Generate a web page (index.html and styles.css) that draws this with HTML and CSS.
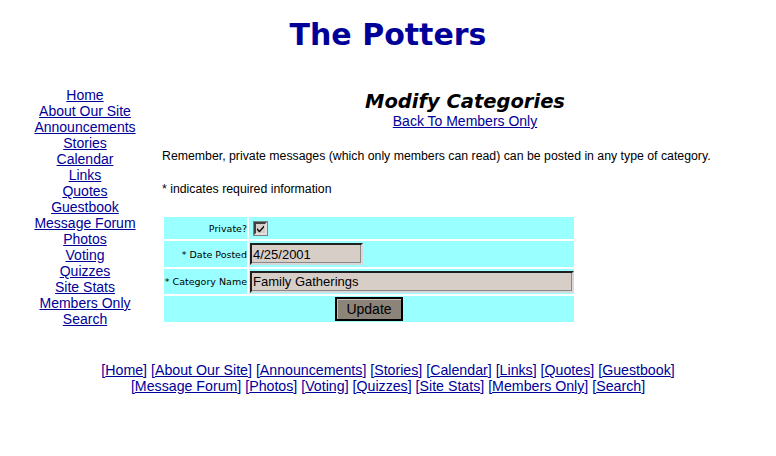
FILE: index.html
```html
<!DOCTYPE html>
<html>
<head>
<meta charset="utf-8">
<link rel="stylesheet" href="styles.css">
</head>
<body>
<h1 class="site-title">The Potters</h1>
<div class="layout">
  <nav class="side-nav">
    <a href="#">Home</a>
    <a href="#">About Our Site</a>
    <a href="#">Announcements</a>
    <a href="#">Stories</a>
    <a href="#">Calendar</a>
    <a href="#">Links</a>
    <a href="#">Quotes</a>
    <a href="#">Guestbook</a>
    <a href="#">Message Forum</a>
    <a href="#">Photos</a>
    <a href="#">Voting</a>
    <a href="#">Quizzes</a>
    <a href="#">Site Stats</a>
    <a href="#">Members Only</a>
    <a href="#">Search</a>
  </nav>
  <main class="content">
    <h2 class="page-title">Modify Categories</h2>
    <div class="back"><a href="#">Back To Members Only</a></div>
    <p class="note">Remember, private messages (which only members can read) can be posted in any type of category.</p>
    <p class="note">* indicates required information</p>
    <table class="form-table">
      <tr class="r1">
        <td class="lbl">Private?</td>
        <td class="val"><span class="checkbox"><svg width="9" height="9" viewBox="0 0 9 9"><path d="M1 4 L3.5 6.5 L8 1.5 L8 3.5 L3.5 8.5 L1 6 Z" fill="#000"/></svg></span></td>
      </tr>
      <tr class="r2">
        <td class="lbl">* Date Posted</td>
        <td class="val"><span class="input date">4/25/2001</span></td>
      </tr>
      <tr class="r3">
        <td class="lbl">* Category Name</td>
        <td class="val"><span class="input name">Family Gatherings</span></td>
      </tr>
      <tr class="r4">
        <td colspan="2" class="btn-cell"><span class="button">Update</span></td>
      </tr>
    </table>
  </main>
</div>
<footer class="footer">
  <div>[<a href="#">Home</a>] [<a href="#">About Our Site</a>] [<a href="#">Announcements</a>] [<a href="#">Stories</a>] [<a href="#">Calendar</a>] [<a href="#">Links</a>] [<a href="#">Quotes</a>] [<a href="#">Guestbook</a>]</div>
  <div>[<a href="#">Message Forum</a>] [<a href="#">Photos</a>] [<a href="#">Voting</a>] [<a href="#">Quizzes</a>] [<a href="#">Site Stats</a>] [<a href="#">Members Only</a>] [<a href="#">Search</a>]</div>
</footer>
</body>
</html>
```

FILE: styles.css
```css
html, body { background: #fff; }
body {
  margin: 8px;
  font-family: "Liberation Sans", Arial, sans-serif;
  color: #000;
}
a { color: #000099; text-decoration: underline; }

.site-title {
  margin: 10px 0 0 0;
  text-align: center;
  font-family: "DejaVu Sans", Verdana, sans-serif;
  font-weight: bold;
  font-size: 30px;
  line-height: 34px;
  color: #000099;
}

.layout {
  display: flex;
  margin-top: 35px;
}
.side-nav {
  width: 154px;
  flex: none;
  display: flex;
  flex-direction: column;
  align-items: center;
  font-size: 14px;
  line-height: 16px;
}
.content {
  flex: 1;
}
.page-title {
  margin: 4px 0 0 0;
  text-align: center;
  font-family: "DejaVu Sans", Verdana, sans-serif;
  font-weight: bold;
  font-style: italic;
  font-size: 19.5px;
  line-height: 22px;
}
.back {
  text-align: center;
  font-size: 14px;
  line-height: 16px;
}
.note {
  margin: 19px 0 0 0;
  font-size: 12.3px;
  line-height: 17px;
}
.note + .note { margin-top: 16px; }

.form-table {
  margin-top: 17px;
  border-spacing: 2px;
  width: 414px;
}
.form-table td {
  background: #99ffff;
  padding: 0;
}
.lbl {
  width: 83px;
  text-align: right;
  font-family: "DejaVu Sans", Verdana, sans-serif;
  font-size: 9.5px;
  white-space: nowrap;
}
.r1 td { height: 22px; }
.r2 td { height: 26px; }
.r3 td { height: 25px; }
.r4 td { height: 26px; }
.val { padding-left: 1px !important; }
.checkbox {
  display: inline-flex;
  align-items: center;
  justify-content: center;
  width: 9px;
  height: 9px;
  margin-left: 4px;
  vertical-align: middle;
  background: #d6cec6;
  border: 2px solid;
  border-color: #404040 #e0e0e0 #e0e0e0 #404040;
  outline: 1px solid #808080;
}
.input {
  display: flex;
  align-items: center;
  box-sizing: border-box;
  height: 22px;
  padding-left: 1px;
  background: #d8cec8;
  border: 2px solid;
  border-color: #202020 #d8d8d8 #d8d8d8 #202020;
  box-shadow: inset -1px -1px 0 #888;
  font-size: 13px;
}
.date { width: 113px; }
.name { width: 324px; }
.btn-cell { text-align: center; }
.button {
  display: inline-flex;
  align-items: center;
  justify-content: center;
  box-sizing: border-box;
  width: 68px;
  height: 24px;
  background: #8c8478;
  border: 2px solid #000;
  box-shadow: inset 1px 1px 0 #c8c0b8;
  font-size: 14px;
}

.footer {
  margin-top: 35px;
  text-align: center;
  font-size: 14.2px;
  line-height: 16px;
  color: #000099;
}
```
